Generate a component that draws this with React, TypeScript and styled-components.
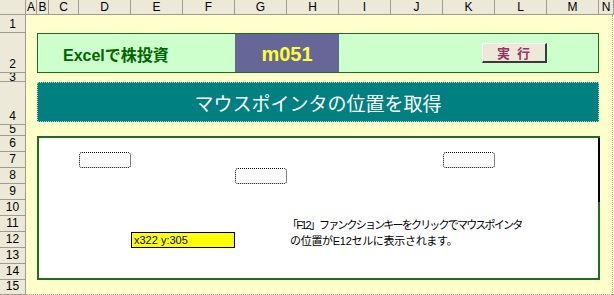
import React from "react";
import styled, { createGlobalStyle } from "styled-components";

const GlobalStyle = createGlobalStyle`
  html, body { margin: 0; padding: 0; background: #ffffcc; }
  body {
    font-family: "Liberation Sans", "Noto Sans CJK JP", sans-serif;
    overflow: hidden;
  }
`;

const COLS = ["A", "B", "C", "D", "E", "F", "G", "H", "I", "J", "K", "L", "M", "N"];
const COL_W = [11, 12, 30, 52, 52, 52, 52, 52, 52, 52, 52, 52, 52, 15];
const ROW_H = [18, 40, 9, 43, 11, 16, 16, 16, 16, 16, 16, 16, 16, 16, 15];

// "B2:M2" -> grid-area "row-start / col-start / row-end / col-end"
const cells = (ref: string): string => {
  const [a, b = a] = ref.split(":");
  const parse = (s: string) => {
    const m = s.match(/^([A-Z])(\d+)$/)!;
    return { c: COLS.indexOf(m[1]) + 2, r: Number(m[2]) + 1 };
  };
  const p = parse(a);
  const q = parse(b);
  return `${p.r} / ${p.c} / ${q.r + 1} / ${q.c + 1}`;
};

const Sheet = styled.div`
  display: grid;
  grid-template-columns: 26px ${COL_W.map((w) => `${w}px`).join(" ")};
  grid-template-rows: 15px ${ROW_H.map((h) => `${h}px`).join(" ")};
  width: 614px;
  height: 295px;
  background: #ffffcc;
  overflow: hidden;
`;

const Corner = styled.div`
  grid-area: 1 / 1 / 2 / 2;
  background: #ece9d8;
  border-right: 1px solid #9d9d92;
  border-bottom: 1px solid #9d9d92;
`;

const ColHeader = styled.div<{ $col: number }>`
  grid-row: 1;
  grid-column: ${(p) => p.$col + 2};
  background: #ece9d8;
  border-right: 1px solid #9d9d92;
  border-bottom: 1px solid #9d9d92;
  display: flex;
  align-items: center;
  justify-content: center;
  font-size: 12px;
  line-height: 14px;
  color: #000;
  overflow: hidden;
`;

const RowHeader = styled.div<{ $row: number; $short?: boolean }>`
  grid-column: 1;
  grid-row: ${(p) => p.$row + 1};
  background: #ece9d8;
  border-right: 1px solid #9d9d92;
  border-bottom: 1px solid #9d9d92;
  display: flex;
  align-items: ${(p) => (p.$short ? "flex-start" : "flex-end")};
  justify-content: center;
  font-size: 12px;
  line-height: ${(p) => (p.$short ? "8px" : "15px")};
  color: #000;
  overflow: hidden;
`;

const Placed = styled.div<{ $at: string }>`
  grid-area: ${(p) => p.$at};
  min-width: 0;
  min-height: 0;
`;

const TitlePanel = styled(Placed)`
  background: #ccffcc;
  border: 1px solid #1f6b1f;
`;

const TitleText = styled(Placed)`
  display: flex;
  align-items: center;
  padding-left: 14px;
  padding-top: 1px;
  font-size: 16px;
  font-weight: bold;
  color: #006600;
  white-space: nowrap;
`;

const CodeCell = styled(Placed)`
  margin: 1px 0;
  background: #666699;
  display: flex;
  align-items: center;
  justify-content: center;
  padding-top: 3px;
  font-size: 20px;
  font-weight: bold;
  color: #ffff33;
`;

const RunButton = styled.button<{ $at: string }>`
  grid-area: ${(p) => p.$at};
  justify-self: end;
  align-self: center;
  width: 65px;
  height: 20px;
  margin: 0;
  padding: 0 0 0 6px;
  background: #ece9d8;
  border-style: solid;
  border-width: 1px 2px 2px 1px;
  border-color: #ffffff #3a3a3a #3a3a3a #ffffff;
  font-family: "Noto Sans CJK JP", sans-serif;
  font-size: 13px;
  font-weight: bold;
  letter-spacing: 7px;
  line-height: 16px;
  color: #993366;
`;

const Banner = styled(Placed)`
  margin-bottom: 3px;
  background: #008080;
  border: 1px dotted #a8e0a8;
  display: flex;
  align-items: center;
  justify-content: center;
  font-family: "Noto Sans CJK JP", sans-serif;
  font-size: 19px;
  color: #ffffff;
  white-space: nowrap;
`;

const StagePanel = styled(Placed)`
  margin-right: -1px;
  border: 2px solid #236b23;
  border-right: none;
  padding-right: 2px;
  background:
    linear-gradient(to bottom, #000 64px, #236b23 64px) right top / 2px 100% no-repeat,
    #ffffff;
`;

const MarkerBox = styled(Placed)`
  border: 1px dotted #000;
  border-radius: 3px;
`;

const CoordCell = styled(Placed)`
  background: #ffff00;
  border: 1px solid #000;
  display: flex;
  align-items: center;
  padding-left: 2px;
  font-size: 11px;
  color: #000;
`;

const Note = styled(Placed)<{ $tight?: boolean }>`
  display: flex;
  align-items: center;
  padding-left: ${(p) => (p.$tight ? "0" : "3px")};
  font-size: 11px;
  letter-spacing: ${(p) => (p.$tight ? "-1.8px" : "-0.3px")};
  color: #000;
  white-space: nowrap;
`;

const PageBreakV = styled(Placed)`
  margin-right: 1px;
  border-right: 1px dotted #d08c8c;
`;

const PageBreakH = styled(Placed)`
  border-bottom: 1px dotted #d08c8c;
`;

export default function App() {
  return (
    <>
      <GlobalStyle />
      <Sheet>
        <Corner />
        {COLS.map((c, i) => (
          <ColHeader key={c} $col={i}>
            {c}
          </ColHeader>
        ))}
        {ROW_H.map((h, i) => (
          <RowHeader key={i} $row={i + 1} $short={h < 12}>
            {i + 1}
          </RowHeader>
        ))}

        <TitlePanel $at={cells("B2:M2")} />
        <TitleText $at={cells("C2:F2")}>Excelで株投資</TitleText>
        <CodeCell $at={cells("G2:H2")}>m051</CodeCell>
        <RunButton $at={cells("K2:L2")}>実行</RunButton>

        <Banner $at={cells("B4:M4")}>マウスポインタの位置を取得</Banner>

        <StagePanel $at={cells("B6:M14")} />
        <MarkerBox $at={cells("D7")} />
        <MarkerBox $at={cells("G8")} />
        <MarkerBox $at={cells("K7")} />
        <CoordCell $at={cells("E12:F12")}>x322 y:305</CoordCell>
        <Note $at={cells("H11:M11")} $tight>
          「F12」ファンクションキーをクリックでマウスポインタ
        </Note>
        <Note $at={cells("H12:M12")}>の位置がE12セルに表示されます。</Note>

        <PageBreakV $at={cells("N1:N15")} />
        <PageBreakH $at={cells("A15:N15")} />
      </Sheet>
    </>
  );
}
